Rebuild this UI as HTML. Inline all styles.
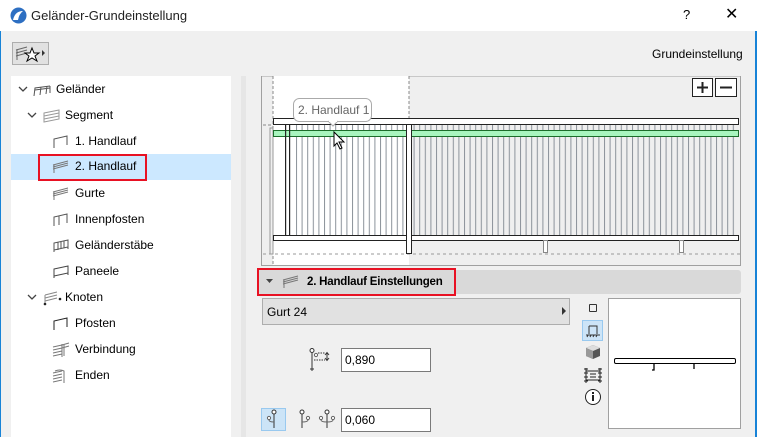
<!DOCTYPE html>
<html><head><meta charset="utf-8"><style>
*{box-sizing:border-box;margin:0;padding:0}
body{width:757px;height:437px;overflow:hidden;background:#f0f0f0;font-family:"Liberation Sans",sans-serif;font-size:12px;color:#000;position:relative}
.a{position:absolute}
.tb{left:0;top:0;width:757px;height:31px;background:#fff}
.row{position:absolute;left:11px;width:220px;height:25px;line-height:25px}
.row span{position:absolute}
.row svg{position:absolute;top:5px}
.inp{position:absolute;background:#fff;border:1px solid #7a7a7a;height:24px;line-height:22px;padding-left:3px;font-size:12px}
</style></head><body>
<div class="a" style="left:0;top:0;width:1px;height:437px;background:#1883d7"></div>
<div class="a" style="left:755px;top:0;width:2px;height:437px;background:#1883d7"></div>
<div class="a tb"></div>
<svg class="a" style="left:10px;top:7px" width="17" height="17" viewBox="0 0 17 17"><circle cx="8.5" cy="8.5" r="8" fill="#2d6fc2"/><path d="M3 13 Q5 4 13 4 Q9 7 8 13Z" fill="#fff"/></svg>
<div class="a" style="left:31px;top:8px;font-size:13px;color:#222">Geländer-Grundeinstellung</div>
<div class="a" style="left:683px;top:7px;font-size:13px">?</div>
<div class="a" style="left:725px;top:4px;font-size:16px">✕</div>
<div class="a" style="left:12px;top:42px;width:37px;height:23px;background:#e1e1e1;border:1px solid #adadad"></div>
<svg class="a" style="left:14px;top:44px" width="34" height="20"><path d="M2 6 L13 3 M2 9 L13 6 M2 12 L13 9 M3 6 V16" stroke="#666" fill="none"/><path d="M18 4 L20 9 L25 9 L21 12 L23 17 L18 14 L13 17 L15 12 L11 9 L16 9Z" fill="#fff" stroke="#000"/><path d="M28 6 L31 9 L28 12Z" fill="#333"/></svg>
<div class="a" style="left:652px;top:47px;font-size:12px">Grundeinstellung</div>
<!-- tree -->
<div class="a" style="left:11px;top:76px;width:220px;height:361px;background:#fff"></div>
<div class="a" style="left:241px;top:76px;width:5px;height:361px;background:#e6e6e6"></div>
<div class="a" style="left:11px;top:154px;width:220px;height:26px;background:#cce8ff"></div>
<div class="a" style="left:38px;top:154px;width:109px;height:27px;border:2px solid #e81123"></div>
<div class="row" style="top:77px"><svg style="left:7px;top:9px" width="10" height="7"><path d="M1 1 L5 5 L9 1" stroke="#444" fill="none" stroke-width="1.3"/></svg><svg style="left:21px" width="20" height="15"><path d="M2 14 L3 6 L18 4 M8 13 L9 5 M14 12 L15 4 M18 4 L18 11 M3 8 L18 6" stroke="#555" fill="none"/></svg><span style="left:45px">Geländer</span></div>
<div class="row" style="top:103px"><svg style="left:16px;top:9px" width="10" height="7"><path d="M1 1 L5 5 L9 1" stroke="#444" fill="none" stroke-width="1.3"/></svg><svg style="left:31px" width="20" height="15"><path d="M2 5 L17 2 L17 11 L2 14Z M2 8 L17 5 M2 11 L17 8" stroke="#999" fill="none"/></svg><span style="left:54px">Segment</span></div>
<div class="row" style="top:129px"><svg style="left:41px" width="18" height="15"><path d="M2 14 V5 L15 2 V11" stroke="#555" fill="none"/></svg><span style="left:64px">1. Handlauf</span></div>
<div class="row" style="top:154px"><svg style="left:41px" width="18" height="15"><path d="M1 6 L16 2 M1 8 L16 4 M1 10 L16 6 M2 6 V14" stroke="#777" fill="none"/></svg><span style="left:64px">2. Handlauf</span></div>
<div class="row" style="top:181px"><svg style="left:41px" width="18" height="15"><path d="M1 6 L16 2 M1 8 L16 4 M1 10 L16 6 M2 6 V14" stroke="#777" fill="none"/></svg><span style="left:64px">Gurte</span></div>
<div class="row" style="top:207px"><svg style="left:41px" width="18" height="15"><path d="M2 14 V5 L15 2 V11 M7 13 V4" stroke="#555" fill="none"/></svg><span style="left:64px">Innenpfosten</span></div>
<div class="row" style="top:233px"><svg style="left:41px" width="18" height="15"><path d="M2 14 V5 L16 2 V11 M2 12 L16 9 M6 12 V4 M9 11 V4 M12 10 V3" stroke="#555" fill="none"/></svg><span style="left:64px">Geländerstäbe</span></div>
<div class="row" style="top:259px"><svg style="left:41px" width="18" height="15"><path d="M2 14 V5 L16 2 V11 M2 5 L16 2 L16 9 L2 12Z" stroke="#444" fill="none"/></svg><span style="left:64px">Paneele</span></div>
<div class="row" style="top:285px"><svg style="left:16px;top:9px" width="10" height="7"><path d="M1 1 L5 5 L9 1" stroke="#444" fill="none" stroke-width="1.3"/></svg><svg style="left:31px" width="20" height="16"><path d="M3 5 L15 2 M3 8 L15 5 M3 11 L15 8 M3 5 V14" stroke="#888" fill="none"/><circle cx="3" cy="14" r="1.3" fill="#222"/><circle cx="18" cy="9" r="1.3" fill="#222"/></svg><span style="left:54px">Knoten</span></div>
<div class="row" style="top:311px"><svg style="left:41px" width="18" height="15"><path d="M2 14 V5 L15 2 V11" stroke="#222" fill="none"/></svg><span style="left:64px">Pfosten</span></div>
<div class="row" style="top:337px"><svg style="left:41px" width="18" height="16"><path d="M1 5 L10 3 M1 8 L10 6 M1 11 L10 9 M1 14 L10 12 M10 3 L17 1 M10 6 L17 4 M10 2 V15 M12 2 V14" stroke="#777" fill="none"/></svg><span style="left:64px">Verbindung</span></div>
<div class="row" style="top:363px"><svg style="left:41px" width="18" height="16"><path d="M1 5 L10 3 M1 8 L10 6 M1 11 L10 9 M1 14 L10 12 M3 3 Q8 1 12 3 V15" stroke="#777" fill="none"/></svg><span style="left:64px">Enden</span></div>
<!-- preview -->
<svg class="a" style="left:261px;top:76px" width="480" height="190" viewBox="261 76 480 190">
<defs><pattern id="bal" x="296" y="0" width="5.6" height="10" patternUnits="userSpaceOnUse"><rect x="0" y="0" width="1" height="10" fill="#8b929a"/></pattern></defs>
<rect x="261" y="76" width="480" height="190" fill="#efefef"/>
<rect x="261.5" y="76" width="479" height="189.5" fill="none" stroke="#a0a0a0"/>
<rect x="273" y="76" width="136" height="189" fill="#fff"/>
<line x1="273" y1="76" x2="273" y2="265" stroke="#888" stroke-dasharray="3,2"/>
<line x1="409" y1="76" x2="409" y2="118" stroke="#888" stroke-dasharray="3,2"/>
<line x1="263" y1="254" x2="740" y2="254" stroke="#999" stroke-dasharray="3,3"/>
<line x1="263" y1="125" x2="273" y2="125" stroke="#888" stroke-dasharray="3,2"/>
<rect x="270" y="128" width="3" height="126" fill="none" stroke="#999"/>
<rect x="296" y="124" width="442" height="111" fill="url(#bal)"/>
<rect x="273.5" y="118.5" width="465" height="6" fill="#fff" stroke="#222"/>
<rect x="273.5" y="130.5" width="465" height="6" fill="#a8f5be" stroke="#1b6d2a"/>
<rect x="273.5" y="235.5" width="465" height="5" fill="#fff" stroke="#222"/>
<rect x="285" y="124" width="1.2" height="111" fill="#222"/><rect x="289" y="124" width="1.2" height="111" fill="#222"/>
<rect x="406.5" y="124.5" width="5" height="129" fill="#fff" stroke="#222"/>
<rect x="543.5" y="240.5" width="4" height="12" fill="#fff" stroke="#888"/>
<rect x="679.5" y="240.5" width="4" height="12" fill="#fff" stroke="#888"/>
<rect x="293.5" y="98.5" width="78" height="23" rx="6" fill="#fff" stroke="#aaa"/>
<path d="M328 121 L333 126 L338 121" fill="#fff" stroke="#aaa"/><rect x="329" y="119" width="8" height="3" fill="#fff"/>
<text x="298" y="114" font-family="Liberation Sans" font-size="12" fill="#666">2. Handlauf 1</text>
<path d="M334 132 L334 146 L337 143 L340 149 L342 148 L339 142 L344 142Z" fill="#fff" stroke="#000"/>
<rect x="692.5" y="78.5" width="20" height="18" fill="#fff" stroke="#222"/><path d="M697 87.5 H708 M702.5 82 V93" stroke="#222" stroke-width="2"/>
<rect x="715.5" y="78.5" width="21" height="18" fill="#fff" stroke="#222"/><path d="M720 87.5 H732" stroke="#222" stroke-width="2"/>
</svg>
<!-- section header -->
<div class="a" style="left:257px;top:270px;width:484px;height:24px;background:#d9d9d9;border-radius:3px"></div>
<div class="a" style="left:257px;top:268px;width:199px;height:28px;border:2px solid #e81123"></div>
<svg class="a" style="left:266px;top:279px" width="8" height="5"><path d="M0 0 H7 L3.5 4Z" fill="#444"/></svg>
<svg class="a" style="left:282px;top:274px" width="18" height="15"><path d="M1 6 L16 2 M1 8 L16 4 M1 10 L16 6 M2 6 V14" stroke="#777" fill="none"/></svg>
<div class="a" style="left:307px;top:276px;font-weight:bold;font-size:11.5px;letter-spacing:-0.2px">2. Handlauf Einstellungen</div>
<!-- dropdown -->
<div class="a" style="left:262px;top:298px;width:308px;height:27px;background:#e1e1e1;border:1px solid #adadad"></div>
<div class="a" style="left:267px;top:305px">Gurt 24</div>
<svg class="a" style="left:562px;top:307px" width="5" height="8"><path d="M0 0 L4 4 L0 8Z" fill="#333"/></svg>
<!-- icon column -->
<div class="a" style="left:589px;top:304px;width:8px;height:8px;border:1px solid #333;border-radius:1px"></div>
<div class="a" style="left:582px;top:320px;width:21px;height:21px;background:#cce4f7;border:1px solid #99c9ef"></div>
<svg class="a" style="left:584px;top:322px" width="18" height="18"><path d="M5 4 H13 V12 M5 4 V12 M2 13 H16 M3 15 L4 13 M6 15 L7 13 M9 15 L10 13 M12 15 L13 13" stroke="#333" fill="none"/></svg>
<svg class="a" style="left:584px;top:344px" width="18" height="16"><path d="M9 1 L16 4 L16 12 L9 15 L2 12 L2 4Z" fill="#555"/><path d="M9 1 L16 4 L9 7 L2 4Z" fill="#ddd"/><path d="M2 4 L9 7 V15 L2 12Z" fill="#999"/></svg>
<svg class="a" style="left:584px;top:367px" width="18" height="17"><path d="M2 1 V16 M16 1 V16 M2 4 H16 M2 13 H16 M6 7 H12 M6 10 H12" stroke="#222" fill="none"/><path d="M0 2 H4 M0 6 H4 M0 10 H4 M0 14 H4 M14 2 H18 M14 6 H18 M14 10 H18 M14 14 H18" stroke="#222"/></svg>
<svg class="a" style="left:584px;top:388px" width="18" height="18"><circle cx="9" cy="9" r="7.5" fill="#fff" stroke="#222"/><rect x="8" y="7" width="2" height="6" fill="#222"/><rect x="8" y="4" width="2" height="2" fill="#222"/></svg>
<!-- small preview -->
<div class="a" style="left:608px;top:298px;width:133px;height:131px;background:#fff;border:1px solid #a0a0a0"></div>
<svg class="a" style="left:608px;top:298px" width="133" height="131"><rect x="6.5" y="60.5" width="121" height="5" rx="1.5" fill="#fff" stroke="#000"/><path d="M46 66 V72 H44 M86 66 V71" stroke="#000" stroke-width="1.3" fill="none"/></svg>
<!-- inputs -->
<svg class="a" style="left:309px;top:348px" width="26" height="26"><circle cx="3" cy="2.5" r="2" fill="#fff" stroke="#333"/><path d="M3 4.5 V20" stroke="#333"/><circle cx="7" cy="7" r="1.6" fill="#fff" stroke="#666"/><path d="M5 12 H16 M9 5 H16" stroke="#333" stroke-dasharray="1.5,1"/><path d="M18 5 V12 M16 7 L18 4.5 L20 7 M16 10 L18 12.5 L20 10" stroke="#333" fill="none"/><path d="M1 21 H5 M3 19 V23" stroke="#333"/></svg>
<div class="inp" style="left:341px;top:348px;width:90px">0,890</div>
<div class="a" style="left:261px;top:408px;width:25px;height:23px;background:#cce4f7;border:1px solid #99c9ef"></div>
<svg class="a" style="left:266px;top:409px" width="16" height="20"><circle cx="8" cy="3" r="2" fill="#fff" stroke="#333"/><path d="M8 5 V19" stroke="#333"/><circle cx="3" cy="9" r="1.6" fill="#fff" stroke="#666"/><path d="M3 11 Q3 13 8 13" stroke="#666" fill="none"/></svg>
<svg class="a" style="left:298px;top:409px" width="16" height="20"><circle cx="4" cy="3" r="2" fill="#fff" stroke="#333"/><path d="M4 5 V19" stroke="#333"/><circle cx="10" cy="9" r="1.6" fill="#fff" stroke="#666"/><path d="M10 11 Q10 13 4 13" stroke="#666" fill="none"/></svg>
<svg class="a" style="left:318px;top:409px" width="20" height="20"><circle cx="9" cy="3" r="2" fill="#fff" stroke="#333"/><path d="M9 5 V19" stroke="#333"/><circle cx="3" cy="9" r="1.6" fill="#fff" stroke="#666"/><circle cx="15" cy="9" r="1.6" fill="#fff" stroke="#666"/><path d="M3 11 Q3 13 9 13 Q15 13 15 11" stroke="#666" fill="none"/></svg>
<div class="inp" style="left:341px;top:408px;width:90px">0,060</div>
</body></html>
